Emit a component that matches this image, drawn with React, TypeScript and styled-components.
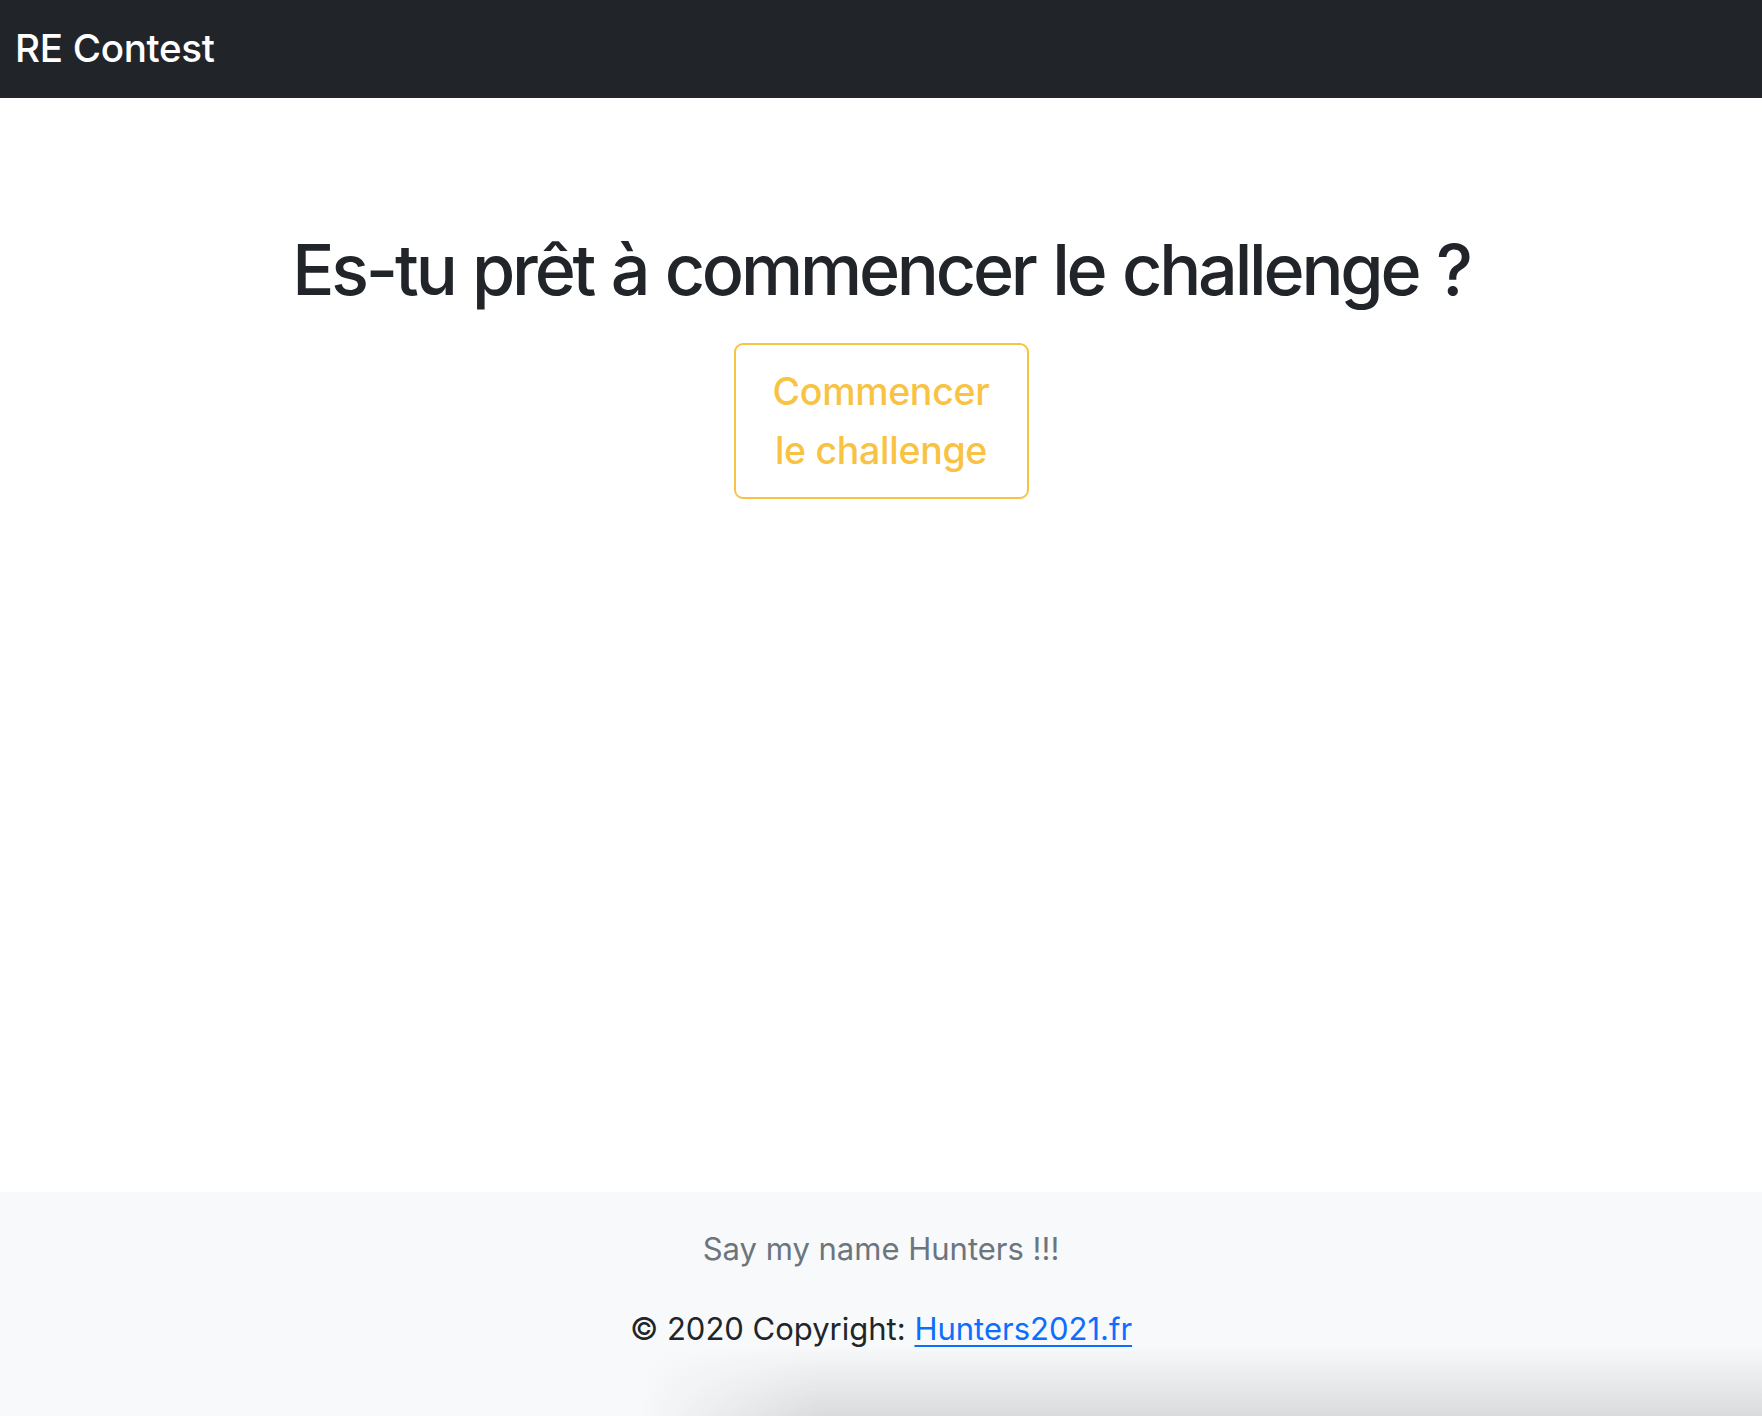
import React from 'react';
import styled, { createGlobalStyle } from 'styled-components';

const GlobalStyle = createGlobalStyle`
  html, body {
    margin: 0;
    padding: 0;
    background: #fff;
  }
  body {
    font-family: Inter, "Noto Sans", "Liberation Sans", sans-serif;
    color: #212529;
  }
  #root {
    min-height: 1416px;
    display: flex;
    flex-direction: column;
  }
`;

const Navbar = styled.nav`
  height: 98px;
  background: #212529;
  display: flex;
  align-items: center;
  padding: 0 15px;
  box-sizing: border-box;
`;

const Brand = styled.a`
  color: #fff;
  font-size: 38.6px;
  font-weight: 500;
  text-decoration: none;
  letter-spacing: -0.3px;
  margin-top: -2px;
`;

const Main = styled.main`
  flex: 1;
  display: flex;
  flex-direction: column;
  align-items: center;
  padding-top: 130px;
`;

const Heading = styled.h1`
  margin: 0 0 31px 0;
  font-size: 70px;
  font-weight: 500;
  line-height: 1.2;
  color: #212529;
  letter-spacing: -3.2px;
  word-spacing: 2px;
`;

const OutlineButton = styled.button<{ $tone: string }>`
  width: 295px;
  box-sizing: border-box;
  padding: 17px 24px;
  background: transparent;
  border: 2px solid ${({ $tone }) => $tone};
  border-radius: 9px;
  color: ${({ $tone }) => $tone};
  font-family: inherit;
  font-size: 37.5px;
  line-height: 59px;
  font-weight: 450;
  letter-spacing: -0.3px;
  cursor: pointer;
`;

const Footer = styled.footer`
  position: relative;
  height: 224px;
  background: #f8f9fa;
  display: flex;
  flex-direction: column;
  align-items: center;
  padding-top: 33px;
  box-sizing: border-box;

  &::after {
    content: '';
    position: absolute;
    left: 0;
    right: 0;
    bottom: 0;
    height: 70px;
    background: linear-gradient(to bottom, rgba(218, 219, 221, 0) 0%, rgba(218, 219, 221, 1) 100%);
    -webkit-mask-image: linear-gradient(to right, transparent 640px, black 820px);
    mask-image: linear-gradient(to right, transparent 640px, black 820px);
    pointer-events: none;
  }
`;

const FooterLine = styled.p<{ $muted?: boolean }>`
  margin: 0 0 32px 0;
  font-size: 31px;
  line-height: 48px;
  color: ${({ $muted }) => ($muted ? '#6c757d' : '#212529')};
`;

const FooterLink = styled.a`
  color: #0d6efd;
  text-decoration: underline;
  text-underline-offset: 5px;
  text-decoration-thickness: 2px;
`;

const App = () => {
  return (
    <>
      <GlobalStyle />
      <Navbar>
        <Brand href="#">RE Contest</Brand>
      </Navbar>
      <Main>
        <Heading>Es-tu prêt à commencer le challenge ?</Heading>
        <OutlineButton $tone="#f8c343">Commencer le challenge</OutlineButton>
      </Main>
      <Footer>
        <FooterLine $muted>Say my name Hunters !!!</FooterLine>
        <FooterLine>
          © 2020 Copyright: <FooterLink href="#">Hunters2021.fr</FooterLink>
        </FooterLine>
      </Footer>
    </>
  );
};

export default App;
